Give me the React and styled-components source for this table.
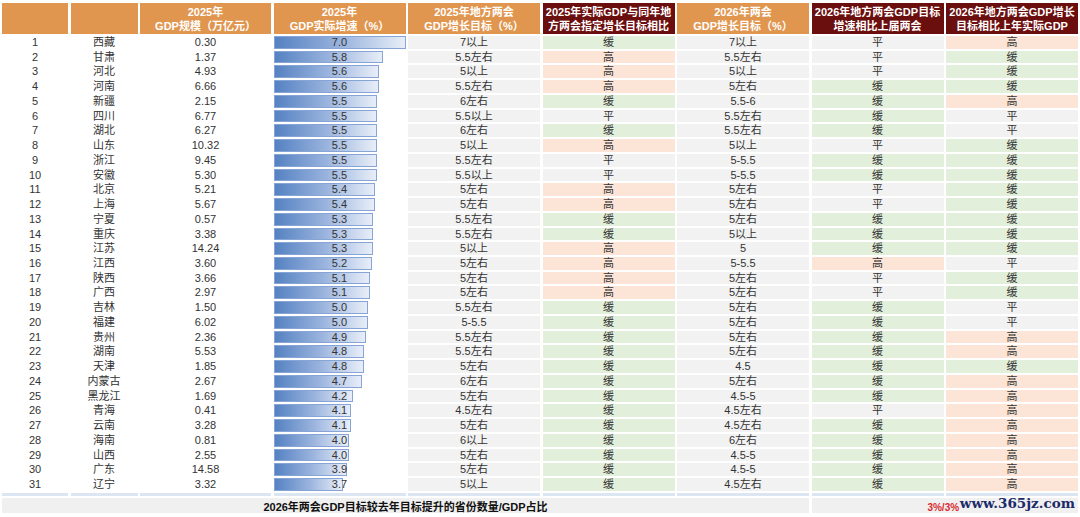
import React from 'react';
import styled, { createGlobalStyle } from 'styled-components';

const GlobalStyle = createGlobalStyle`
  body {
    margin: 0;
    background: #ffffff;
    font-family: "Liberation Sans", "Noto Sans CJK SC", sans-serif;
  }
`;

const tones = {
  gray: '#f2f2f2',
  green: '#e2efda',
  pink: '#fce4d6',
  none: 'transparent',
};

const levelTone = { 缓: 'green', 高: 'pink', 平: 'gray' };

const BAR_MAX = 7.0;

// [name, gdp, growth, target2025, cmp2025, target2026, cmpPrev, cmpActual]
const rows = [
  ['西藏', '0.30', 7.0, '7以上', '缓', '7以上', '平', '高'],
  ['甘肃', '1.37', 5.8, '5.5左右', '高', '5.5左右', '平', '缓'],
  ['河北', '4.93', 5.6, '5以上', '高', '5以上', '平', '缓'],
  ['河南', '6.66', 5.6, '5.5左右', '高', '5左右', '缓', '缓'],
  ['新疆', '2.15', 5.5, '6左右', '缓', '5.5-6', '缓', '高'],
  ['四川', '6.77', 5.5, '5.5以上', '平', '5.5左右', '缓', '平'],
  ['湖北', '6.27', 5.5, '6左右', '缓', '5.5左右', '缓', '平'],
  ['山东', '10.32', 5.5, '5以上', '高', '5以上', '平', '缓'],
  ['浙江', '9.45', 5.5, '5.5左右', '平', '5-5.5', '缓', '缓'],
  ['安徽', '5.30', 5.5, '5.5以上', '平', '5-5.5', '缓', '缓'],
  ['北京', '5.21', 5.4, '5左右', '高', '5左右', '平', '缓'],
  ['上海', '5.67', 5.4, '5左右', '高', '5左右', '平', '缓'],
  ['宁夏', '0.57', 5.3, '5.5左右', '缓', '5左右', '缓', '缓'],
  ['重庆', '3.38', 5.3, '5.5左右', '缓', '5以上', '缓', '缓'],
  ['江苏', '14.24', 5.3, '5以上', '高', '5', '缓', '缓'],
  ['江西', '3.60', 5.2, '5左右', '高', '5-5.5', '高', '平'],
  ['陕西', '3.66', 5.1, '5左右', '高', '5左右', '平', '缓'],
  ['广西', '2.97', 5.1, '5左右', '高', '5左右', '平', '缓'],
  ['吉林', '1.50', 5.0, '5.5左右', '缓', '5左右', '缓', '平'],
  ['福建', '6.02', 5.0, '5-5.5', '缓', '5左右', '缓', '平'],
  ['贵州', '2.36', 4.9, '5.5左右', '缓', '5左右', '缓', '高'],
  ['湖南', '5.53', 4.8, '5.5左右', '缓', '5左右', '缓', '高'],
  ['天津', '1.85', 4.8, '5左右', '缓', '4.5', '缓', '缓'],
  ['内蒙古', '2.67', 4.7, '6左右', '缓', '5左右', '缓', '高'],
  ['黑龙江', '1.69', 4.2, '5左右', '缓', '4.5-5', '缓', '高'],
  ['青海', '0.41', 4.1, '4.5左右', '缓', '4.5左右', '平', '高'],
  ['云南', '3.28', 4.1, '5左右', '缓', '4.5左右', '缓', '高'],
  ['海南', '0.81', 4.0, '6以上', '缓', '6左右', '缓', '高'],
  ['山西', '2.55', 4.0, '5左右', '缓', '4.5-5', '缓', '高'],
  ['广东', '14.58', 3.9, '5左右', '缓', '4.5-5', '缓', '高'],
  ['辽宁', '3.32', 3.7, '5以上', '缓', '4.5左右', '缓', '高'],
];

const headers = [
  { lines: [], dark: false },
  { lines: [], dark: false },
  { lines: ['2025年', 'GDP规模（万亿元）'], dark: false },
  { lines: ['2025年', 'GDP实际增速（%）'], dark: false },
  { lines: ['2025年地方两会', 'GDP增长目标（%）'], dark: false },
  { lines: ['2025年实际GDP与同年地', '方两会指定增长目标相比'], dark: true },
  { lines: ['2026年两会', 'GDP增长目标（%）'], dark: false },
  { lines: ['2026年地方两会GDP目标', '增速相比上届两会'], dark: true },
  { lines: ['2026年地方两会GDP增长', '目标相比上年实际GDP'], dark: true },
];

const Table = styled.div`
  display: grid;
  grid-template-columns: 66px 67px 131px 132px 132px 132px 132px 132px 132px;
  grid-template-rows: 31px repeat(31, 12.74px) 3px 15.5px;
  column-gap: 2.5px;
  row-gap: 2px;
  padding: 3px 2px 0 2px;
  width: 1080px;
  box-sizing: border-box;
`;

const HeadCell = styled.div`
  background: ${({ $dark }) => ($dark ? '#6b0e0e' : '#e1964f')};
  color: #ffffff;
  font-size: 11px;
  font-weight: bold;
  line-height: 14px;
  display: flex;
  flex-direction: column;
  align-items: center;
  justify-content: center;
  text-align: center;
  white-space: nowrap;
  overflow: hidden;
`;

const Cell = styled.div`
  background: ${({ $tone }) => tones[$tone || 'none']};
  color: #333333;
  font-size: 11px;
  line-height: 12.74px;
  text-align: center;
  white-space: nowrap;
`;

const BarCell = styled.div`
  position: relative;
  font-size: 11px;
  line-height: 12.74px;
  color: #333333;
  text-align: center;
`;

const Bar = styled.div`
  position: absolute;
  left: 0;
  top: 0;
  bottom: 0;
  box-sizing: border-box;
  border: 1px solid #86a5d6;
  background: linear-gradient(to right, #5582c2 0%, #98b2dd 50%, #e8eef8 100%);
`;

const BarValue = styled.span`
  position: relative;
`;

const Divider = styled.div`
  background: #dce6f2;
`;

const FootLabel = styled.div`
  grid-column: 1 / 8;
  background: #f0f0f0;
  color: #111111;
  font-size: 11px;
  font-weight: bold;
  display: flex;
  align-items: center;
  justify-content: center;
  white-space: nowrap;
`;

const FootValue = styled.div`
  grid-column: 8 / 10;
  position: relative;
  background: #f0f0f0;
  display: flex;
  align-items: center;
  justify-content: center;
`;

const RedText = styled.span`
  color: #d92a2f;
  font-size: 10px;
  font-weight: bold;
  margin-top: 3px;
  margin-right: 3px;
`;

const Watermark = styled.span`
  position: absolute;
  right: 3px;
  top: -3px;
  font-family: "DejaVu Serif", "Liberation Serif", serif;
  font-size: 13.5px;
  font-weight: bold;
  color: #1c2a6a;
`;

export default function App() {
  return (
    <>
      <GlobalStyle />
      <Table>
        {headers.map((h, i) => (
          <HeadCell key={`h${i}`} $dark={h.dark}>
            {h.lines.map((l) => (
              <span key={l}>{l}</span>
            ))}
          </HeadCell>
        ))}

        {rows.map((r, i) => {
          const [name, gdp, growth, t25, c25, t26, cPrev, cAct] = r;
          return (
            <React.Fragment key={name}>
              <Cell>{i + 1}</Cell>
              <Cell>{name}</Cell>
              <Cell>{gdp}</Cell>
              <BarCell>
                <Bar style={{ width: `${(growth / BAR_MAX) * 100}%` }} />
                <BarValue>{growth.toFixed(1)}</BarValue>
              </BarCell>
              <Cell $tone="gray">{t25}</Cell>
              <Cell $tone={levelTone[c25]}>{c25}</Cell>
              <Cell $tone="gray">{t26}</Cell>
              <Cell $tone={levelTone[cPrev]}>{cPrev}</Cell>
              <Cell $tone={levelTone[cAct]}>{cAct}</Cell>
            </React.Fragment>
          );
        })}

        {headers.map((_, i) => (
          <Divider key={`d${i}`} />
        ))}

        <FootLabel>2026年两会GDP目标较去年目标提升的省份数量/GDP占比</FootLabel>
        <FootValue>
          <RedText>3%/3%</RedText>
          <Watermark>www.365jz.com</Watermark>
        </FootValue>
      </Table>
    </>
  );
}
